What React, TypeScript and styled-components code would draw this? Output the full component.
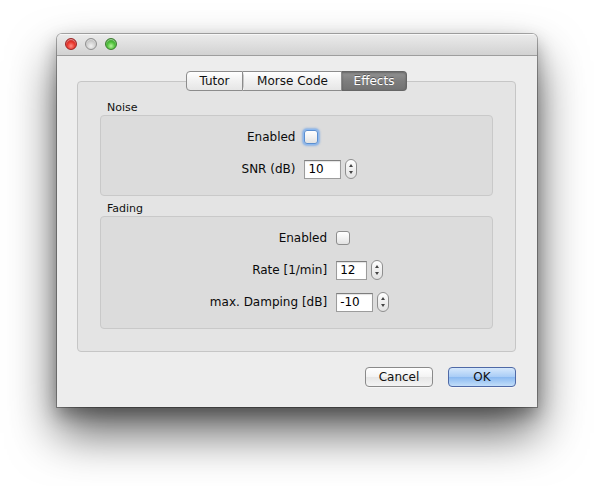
import React from "react";
import styled, { createGlobalStyle, css } from "styled-components";

const Global = createGlobalStyle`
  html, body { margin: 0; padding: 0; background: #ffffff; }
  body { font-family: "DejaVu Sans", "Liberation Sans", sans-serif; font-size: 12px; color: #111; }
  * { box-sizing: border-box; }
`;

const Page = styled.div`
  width: 594px;
  height: 486px;
  padding: 34px 0 0 57px;
`;

const Window = styled.div`
  width: 480px;
  height: 373px;
  background: #ededed;
  border-radius: 5px 5px 0 0;
  box-shadow: 0 0 0 1px rgba(0, 0, 0, 0.3), 0 26px 48px rgba(0, 0, 0, 0.62), 0 8px 18px rgba(0, 0, 0, 0.3);
  display: flex;
  flex-direction: column;
  overflow: hidden;
`;

const TitleBar = styled.div`
  height: 22px;
  flex: none;
  background: linear-gradient(#ebebeb, #d2d2d2);
  border-bottom: 1px solid #9e9e9e;
  box-shadow: inset 0 1px 0 #f7f7f7;
  display: flex;
  align-items: center;
  gap: 8px;
  padding: 0 0 1px 8px;
`;

const Light = styled.span<{ $c: "red" | "gray" | "green" }>`
  width: 12px;
  height: 12px;
  border-radius: 50%;
  ${({ $c }) =>
    $c === "red"
      ? css`
          background: radial-gradient(circle at 50% 70%, #ff8c84 0%, #e8362c 45%, #a8141a 100%);
          border: 1px solid #9b2424;
        `
      : $c === "green"
      ? css`
          background: radial-gradient(circle at 50% 70%, #b6f39c 0%, #4ec03a 45%, #24801c 100%);
          border: 1px solid #3c7d2e;
        `
      : css`
          background: radial-gradient(circle at 50% 70%, #f2f2f2 0%, #cfcfcf 50%, #9c9c9c 100%);
          border: 1px solid #8f8f8f;
        `}
  box-shadow: inset 0 1px 1px rgba(255, 255, 255, 0.6);
`;

const Body = styled.div`
  flex: 1;
  display: flex;
  flex-direction: column;
  padding: 15px 21px 20px 20px;
`;

const TabBar = styled.div`
  display: flex;
  justify-content: center;
  position: relative;
  z-index: 1;
  height: 20px;
`;

const Tab = styled.div<{ $active?: boolean; $last?: boolean; $first?: boolean; $w: number }>`
  width: ${({ $w }) => $w}px;
  height: 20px;
  display: flex;
  align-items: center;
  justify-content: center;
  font-size: 12px;
  border: 1px solid #8c8c8c;
  border-left: none;
  background: linear-gradient(#ffffff, #f1f1f1 50%, #e6e6e6);
  color: #111;
  ${({ $first }) =>
    $first &&
    css`
      border-left: 1px solid #8c8c8c;
      border-radius: 4px 0 0 4px;
    `}
  ${({ $last }) =>
    $last &&
    css`
      border-radius: 0 4px 4px 0;
    `}
  ${({ $active }) =>
    $active &&
    css`
      background: linear-gradient(#939393, #7d7d7d 50%, #727272);
      border-color: #666;
      color: #fff;
      text-shadow: 0 -1px 0 rgba(0, 0, 0, 0.35);
      box-shadow: inset 0 1px 2px rgba(0, 0, 0, 0.3);
    `}
`;

const TabDivider = styled.span`
  width: 1px;
  height: 20px;
  border-top: 1px solid #8c8c8c;
  border-bottom: 1px solid #8c8c8c;
  background: linear-gradient(#ffffff, #c8c8c8 20%, #c8c8c8 80%, #ffffff);
`;

const TabPane = styled.div`
  margin-top: -10px;
  height: 271px;
  border: 1px solid #c6c6c6;
  border-radius: 4px;
  background: #e4e4e4;
  padding: 19px 22px 22px 22px;
  display: flex;
  flex-direction: column;
`;

const GroupTitle = styled.div<{ $gap?: number }>`
  font-size: 11px;
  line-height: 14px;
  height: 14px;
  padding-left: 7px;
  margin-top: ${({ $gap }) => $gap ?? 0}px;
  color: #111;
`;

const GroupBox = styled.div`
  border: 1px solid #c9c9c9;
  border-radius: 4px;
  background: #dcdcdc;
  padding: 10px 0 15px 6px;
  display: flex;
  justify-content: center;
`;

const FormGrid = styled.div<{ $gap: number }>`
  display: grid;
  grid-template-columns: auto auto;
  column-gap: 9px;
  row-gap: ${({ $gap }) => $gap}px;
  align-items: center;
`;

const Label = styled.label`
  justify-self: end;
  font-size: 12px;
  line-height: 22px;
  color: #0a0a0a;
`;

const Field = styled.div`
  display: flex;
  align-items: center;
  gap: 4px;
  height: 22px;
`;

const Check = styled.span<{ $focus?: boolean }>`
  width: 14px;
  height: 14px;
  border-radius: 3px;
  border: 1px solid #8d8d8d;
  background: linear-gradient(#ffffff, #f2f2f2 50%, #e2e2e2);
  ${({ $focus }) =>
    $focus &&
    css`
      border-color: #5b8fd0;
      box-shadow: 0 0 0 1px #8db8ee, 0 0 2px 2px rgba(93, 152, 230, 0.6);
    `}
`;

const Input = styled.div<{ $w: number }>`
  width: ${({ $w }) => $w}px;
  height: 19px;
  background: #fff;
  border: 1px solid #9c9c9c;
  border-top-color: #7e7e7e;
  box-shadow: inset 0 1px 1px rgba(0, 0, 0, 0.12);
  font-size: 12px;
  line-height: 17px;
  padding-left: 3px;
  color: #000;
`;

const Stepper = styled.div`
  width: 12px;
  height: 20px;
  border: 1px solid #8f8f8f;
  border-radius: 6px;
  background: linear-gradient(#ffffff, #efefef 50%, #e3e3e3);
  display: flex;
  flex-direction: column;
  align-items: center;
  justify-content: space-between;
  padding: 4px 0;
`;

const Arrow = styled.span<{ $down?: boolean }>`
  width: 0;
  height: 0;
  border-left: 2.5px solid transparent;
  border-right: 2.5px solid transparent;
  ${({ $down }) =>
    $down
      ? css`
          border-top: 3px solid #444;
        `
      : css`
          border-bottom: 3px solid #444;
        `}
`;

const ButtonRow = styled.div`
  display: flex;
  justify-content: flex-end;
  gap: 15px;
  margin-top: 15px;
`;

const Button = styled.button<{ $primary?: boolean }>`
  width: 68px;
  height: 20px;
  border-radius: 4px;
  font-family: "DejaVu Sans", "Liberation Sans", sans-serif;
  font-size: 12px;
  padding: 0;
  color: #111;
  border: 1px solid #8a8a8a;
  background: linear-gradient(#ffffff, #f3f3f3 50%, #e6e6e6 51%, #f4f4f4);
  box-shadow: 0 1px 0 rgba(255, 255, 255, 0.5);
  ${({ $primary }) =>
    $primary &&
    css`
      border-color: #4f69a6;
      background: linear-gradient(#d6e8fc, #a8ccf6 50%, #8ab9f1 51%, #c2def9);
    `}
`;

function Spin({ value, w }: { value: string; w: number }) {
  return (
    <Field>
      <Input $w={w}>{value}</Input>
      <Stepper>
        <Arrow />
        <Arrow $down />
      </Stepper>
    </Field>
  );
}

export default function App() {
  return (
    <>
      <Global />
      <Page>
        <Window>
          <TitleBar>
            <Light $c="red" />
            <Light $c="gray" />
            <Light $c="green" />
          </TitleBar>
          <Body>
            <TabBar>
              <Tab $first $w={57}>Tutor</Tab>
              <TabDivider />
              <Tab $w={98}>Morse Code</Tab>
              <Tab $active $last $w={65}>Effects</Tab>
            </TabBar>
            <TabPane>
              <GroupTitle>Noise</GroupTitle>
              <GroupBox>
                <FormGrid $gap={10}>
                  <Label>Enabled</Label>
                  <Field>
                    <Check $focus />
                  </Field>
                  <Label>SNR (dB)</Label>
                  <Spin value="10" w={37} />
                </FormGrid>
              </GroupBox>
              <GroupTitle $gap={6}>Fading</GroupTitle>
              <GroupBox>
                <FormGrid $gap={10}>
                  <Label>Enabled</Label>
                  <Field>
                    <Check />
                  </Field>
                  <Label>Rate [1/min]</Label>
                  <Spin value="12" w={31} />
                  <Label>max. Damping [dB]</Label>
                  <Spin value="-10" w={37} />
                </FormGrid>
              </GroupBox>
            </TabPane>
            <ButtonRow>
              <Button>Cancel</Button>
              <Button $primary>OK</Button>
            </ButtonRow>
          </Body>
        </Window>
      </Page>
    </>
  );
}
